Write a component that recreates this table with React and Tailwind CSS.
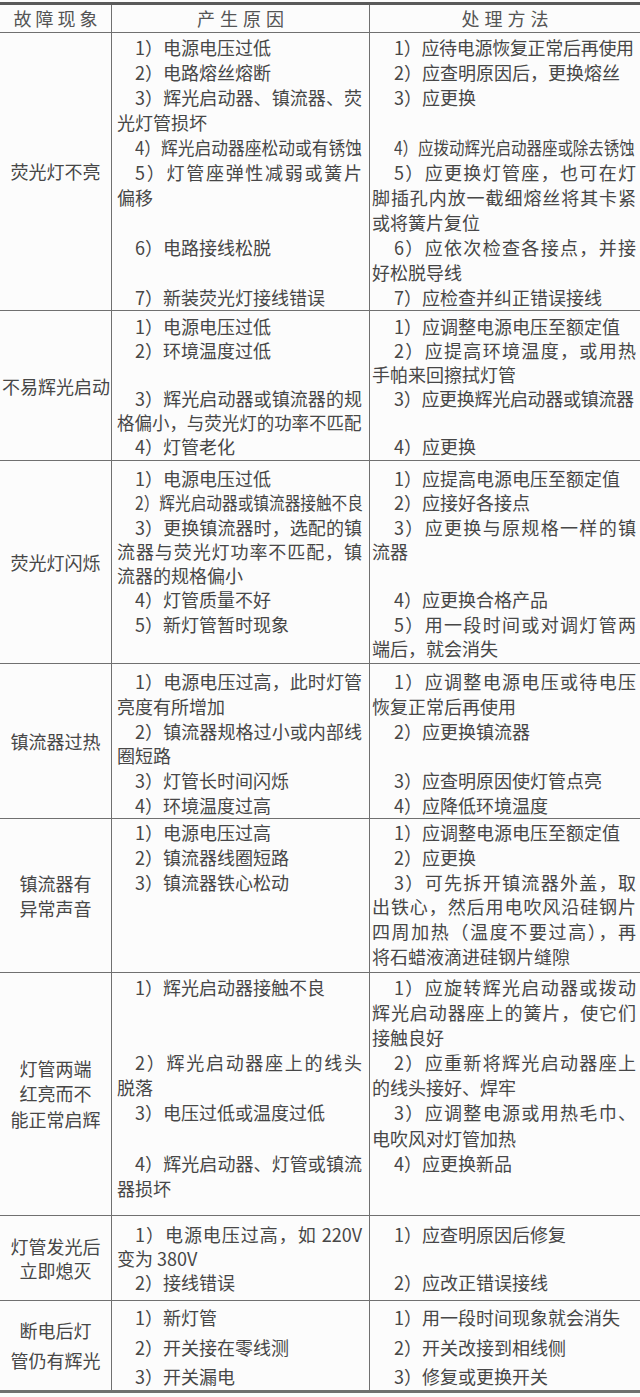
import React from "react";

const SC = {
  a: "tracking-[-0.3px]",
  b: "inline-block origin-left scale-x-[0.97]",
  c: "inline-block origin-left scale-x-[0.93]",
  d: "inline-block origin-left scale-x-[0.87]",
  e: "inline-block origin-left scale-x-[0.86]",
};

// line syntax: leading ">" = indent, trailing "|" = justify, "#x:" prefix = condense key
function parse(s) {
  let t = s;
  let sc = "";
  if (t.startsWith("#")) {
    sc = SC[t[1]];
    t = t.slice(3);
  }
  const indent = t.startsWith(">");
  if (indent) t = t.slice(1);
  const justify = t.endsWith("|");
  if (justify) t = t.slice(0, -1);
  return { t, indent, justify, sc };
}

function Cell({ lines, pad, ind, pt, lh, border }) {
  return (
    <div className={`${pad} ${pt} ${lh} ${border ? "border-r border-[#707070]" : ""} overflow-hidden`}>
      {lines.map((s, i) => {
        const { t, indent, justify, sc } = parse(s);
        return (
          <div
            key={i}
            className={`whitespace-nowrap ${indent ? ind : ""} ${
              justify ? "text-justify [text-align-last:justify]" : ""
            }`}
          >
            {t === "" ? "\u00a0" : sc ? <span className={sc}>{t}</span> : t}
          </div>
        );
      })}
    </div>
  );
}

const rows = [
  {
    h: "h-[278px]",
    pt: "pt-[2px]",
    lh: "leading-[25px]",
    label: ["荧光灯不亮"],
    c2: [
      ">1）电源电压过低",
      ">2）电路熔丝熔断",
      ">3）辉光启动器、镇流器、荧|",
      "光灯管损坏",
      "#c:>4）辉光启动器座松动或有锈蚀",
      ">5）灯管座弹性减弱或簧片|",
      "偏移",
      "",
      ">6）电路接线松脱",
      "",
      ">7）新装荧光灯接线错误",
    ],
    c3: [
      "#a:>1）应待电源恢复正常后再使用",
      ">2）应查明原因后，更换熔丝",
      ">3）应更换",
      "",
      "#e:>4）应拨动辉光启动器座或除去锈蚀",
      ">5）应更换灯管座，也可在灯|",
      "脚插孔内放一截细熔丝将其卡紧|",
      "或将簧片复位",
      ">6）应依次检查各接点，并接|",
      "好松脱导线",
      ">7）应检查并纠正错误接线",
    ],
  },
  {
    h: "h-[150px]",
    pt: "pt-[3px]",
    lh: "leading-[24px]",
    label: ["不易辉光启动"],
    left: true,
    c2: [
      ">1）电源电压过低",
      ">2）环境温度过低",
      "",
      ">3）辉光启动器或镇流器的规|",
      "#b:格偏小，与荧光灯的功率不匹配",
      ">4）灯管老化",
    ],
    c3: [
      ">1）应调整电源电压至额定值",
      ">2）应提高环境温度，或用热|",
      "手帕来回擦拭灯管",
      "#a:>3）应更换辉光启动器或镇流器",
      "",
      ">4）应更换",
    ],
  },
  {
    h: "h-[203px]",
    pt: "pt-[5px]",
    lh: "leading-[24.3px]",
    label: ["荧光灯闪烁"],
    c2: [
      ">1）电源电压过低",
      "#d:>2）辉光启动器或镇流器接触不良",
      ">3）更换镇流器时，选配的镇|",
      "流器与荧光灯功率不匹配，镇|",
      "流器的规格偏小",
      ">4）灯管质量不好",
      ">5）新灯管暂时现象",
      "",
    ],
    c3: [
      ">1）应提高电源电压至额定值",
      ">2）应接好各接点",
      ">3）应更换与原规格一样的镇|",
      "流器",
      "",
      ">4）应更换合格产品",
      ">5）用一段时间或对调灯管两|",
      "端后，就会消失",
    ],
  },
  {
    h: "h-[155px]",
    pt: "pt-[5px]",
    lh: "leading-[24.8px]",
    label: ["镇流器过热"],
    c2: [
      ">1）电源电压过高，此时灯管|",
      "亮度有所增加",
      ">2）镇流器规格过小或内部线|",
      "圈短路",
      ">3）灯管长时间闪烁",
      ">4）环境温度过高",
    ],
    c3: [
      ">1）应调整电源电压或待电压|",
      "恢复正常后再使用",
      ">2）应更换镇流器",
      "",
      ">3）应查明原因使灯管点亮",
      ">4）应降低环境温度",
    ],
  },
  {
    h: "h-[154px]",
    pt: "pt-[1px]",
    lh: "leading-[24.8px]",
    label: ["镇流器有", "异常声音"],
    c2: [">1）电源电压过高", ">2）镇流器线圈短路", ">3）镇流器铁心松动"],
    c3: [
      ">1）应调整电源电压至额定值",
      ">2）应更换",
      ">3）可先拆开镇流器外盖，取|",
      "出铁心，然后用电吹风沿硅钢片|",
      "四周加热（温度不要过高），再|",
      "将石蜡液滴进硅钢片缝隙",
    ],
  },
  {
    h: "h-[243px]",
    pt: "pt-[2px]",
    lh: "leading-[25.1px]",
    label: ["灯管两端", "红亮而不", "能正常启辉"],
    c2: [
      ">1）辉光启动器接触不良",
      "",
      "",
      ">2）辉光启动器座上的线头|",
      "脱落",
      ">3）电压过低或温度过低",
      "",
      ">4）辉光启动器、灯管或镇流|",
      "器损坏",
    ],
    c3: [
      ">1）应旋转辉光启动器或拨动|",
      "辉光启动器座上的簧片，使它们|",
      "接触良好",
      ">2）应重新将辉光启动器座上|",
      "的线头接好、焊牢",
      ">3）应调整电源或用热毛巾、|",
      "电吹风对灯管加热",
      ">4）应更换新品",
    ],
  },
  {
    h: "h-[85px]",
    pt: "pt-[6px]",
    lh: "leading-[24px]",
    label: ["灯管发光后", "立即熄灭"],
    c2: [">1）电源电压过高，如 220V|", "变为 380V", ">2）接线错误"],
    c3: [">1）应查明原因后修复", "", ">2）应改正错误接线"],
  },
  {
    h: "h-[92px] border-b-[3px]",
    pt: "pt-[2px]",
    lh: "leading-[29.5px]",
    label: ["断电后灯", "管仍有辉光"],
    c2: [">1）新灯管", ">2）开关接在零线测", ">3）开关漏电"],
    c3: [">1）用一段时间现象就会消失", ">2）开关改接到相线侧", ">3）修复或更换开关"],
  },
];

export default function App() {
  return (
    <div
      className="w-[640px] h-[1397px] bg-[#fcfcfc] text-[#474747] text-[18px] pt-[2px]"
      style={{ fontFamily: '"Noto Sans CJK SC", "Noto Sans", sans-serif' }}
    >
      <div className="border-t-[3px] border-[#5a5a5a]">
        <div className="grid grid-cols-[112px_258px_1fr] h-[28px] border-b border-[#707070] leading-[27px] text-[#555555]">
          <div className="border-r border-[#707070] text-center tracking-[4px] pl-[4px]">故障现象</div>
          <div className="border-r border-[#707070] text-center tracking-[5px] pl-[5px]">产生原因</div>
          <div className="text-center tracking-[5px] pl-[5px]">处理方法</div>
        </div>
        {rows.map((r, i) => (
          <div
            key={i}
            className={`grid grid-cols-[112px_258px_1fr] border-b border-[#707070] ${r.h}`}
          >
            <div
              className={`border-r border-[#707070] flex flex-col justify-center ${
                r.left ? "items-start pl-[2px]" : "items-center"
              } ${r.lh} overflow-hidden whitespace-nowrap`}
            >
              {r.label.map((l, k) => (
                <div key={k}>{l}</div>
              ))}
            </div>
            <Cell lines={r.c2} pad="pl-[5px] pr-[7px]" ind="pl-[18px]" pt={r.pt} lh={r.lh} border />
            <Cell lines={r.c3} pad="pl-[2px] pr-[4px]" ind="pl-[22px]" pt={r.pt} lh={r.lh} />
          </div>
        ))}
      </div>
    </div>
  );
}
